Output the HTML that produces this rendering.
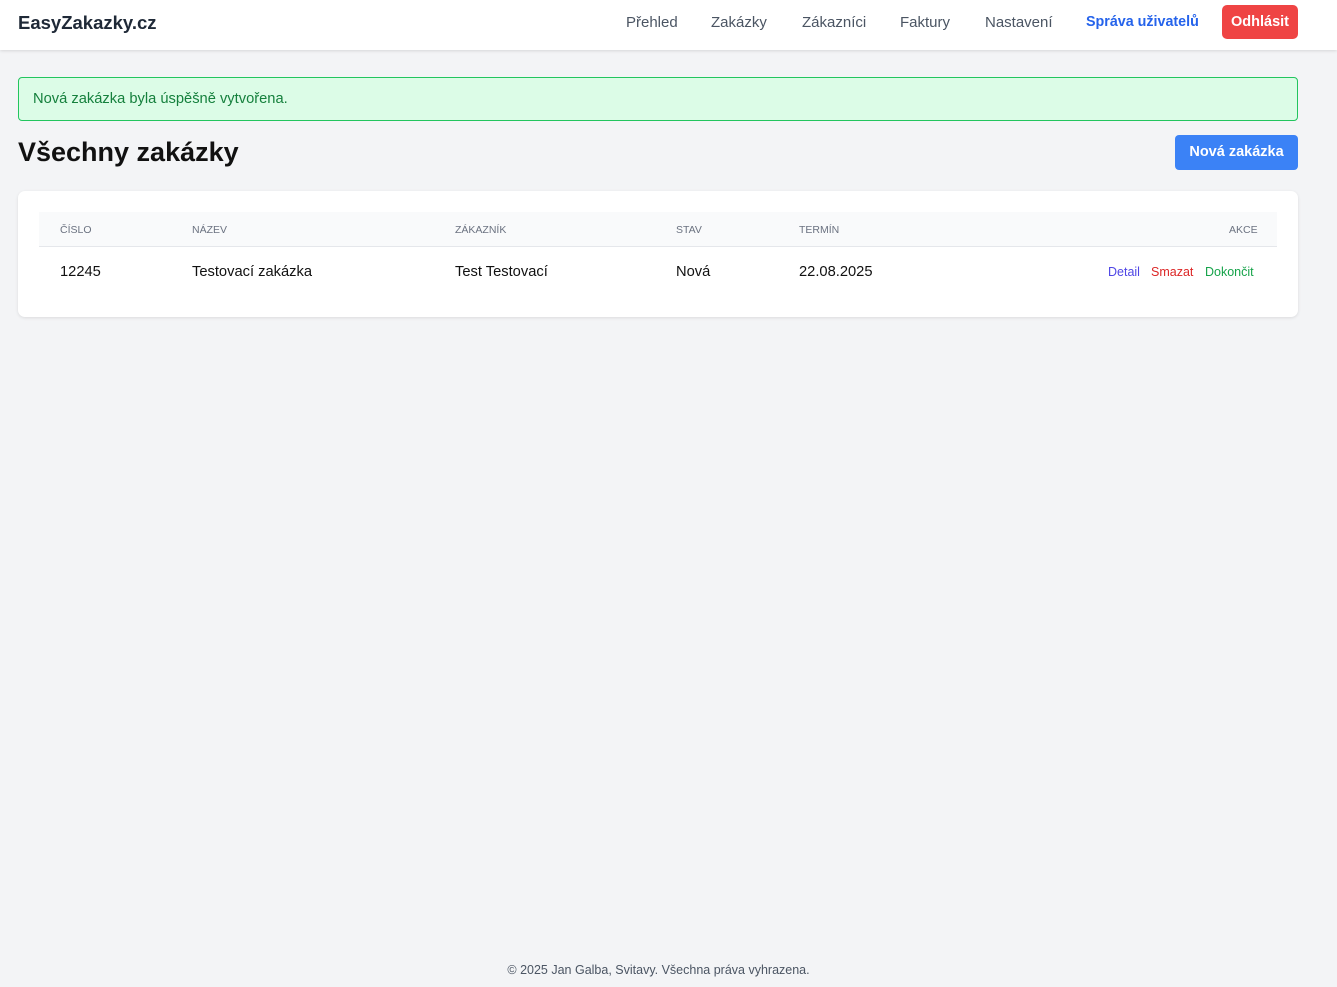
<!DOCTYPE html>
<html><head><meta charset="utf-8"><style>
*{box-sizing:border-box;margin:0;padding:0}
body{width:1337px;height:987px;background:#f3f4f6;font-family:"Liberation Sans",sans-serif;position:relative;overflow:hidden;color:#111}
.nav{position:absolute;top:0;left:0;width:1337px;height:50px;background:#fff;box-shadow:0 1px 3px rgba(0,0,0,.12)}
.logo{position:absolute;left:18px;top:12px;font-size:18.5px;font-weight:bold;color:#1f2937}
.nav a{position:absolute;top:14px;font-size:15px;color:#4b5563;text-decoration:none}
.btnr{position:absolute;left:1222px;top:5px;width:76px;height:34px;background:#ef4444;color:#fff;border-radius:5px;font-weight:bold;font-size:14.5px;text-align:center;line-height:34px}
.alert{position:absolute;left:18px;top:77px;width:1280px;height:44px;background:#dcfce7;border:1px solid #22c55e;border-radius:4px;color:#15803d;font-size:14.7px;padding:13px 14px}
h1{position:absolute;left:18px;top:137px;font-size:27px;font-weight:bold}
.btnb{position:absolute;left:1175px;top:135px;width:123px;height:35px;background:#3b82f6;color:#fff;border-radius:4px;font-weight:bold;font-size:14.5px;text-align:center;line-height:35px}
.card{position:absolute;left:18px;top:191px;width:1280px;height:126px;background:#fff;border-radius:7px;box-shadow:0 1px 3px rgba(0,0,0,.1)}
.th{position:absolute;left:21px;top:21px;width:1238px;height:35px;background:#f9fafb;border-bottom:1px solid #e5e7eb}
.h{position:absolute;top:33px;font-size:10.5px;color:#6b7280}
.c{position:absolute;top:73px;font-size:14.7px;color:#111}
.a{position:absolute;top:74px;font-size:12.5px}
.foot{position:absolute;top:963px;width:100%;text-align:center;font-size:12.5px;color:#4b5563;padding-right:20px}
</style></head><body>
<div class="nav"><div class="logo">EasyZakazky.cz</div>
<a style="left:626px">Přehled</a><a style="left:711px">Zakázky</a><a style="left:802px">Zákazníci</a><a style="left:900px">Faktury</a><a style="left:985px">Nastavení</a><a style="left:1086px;color:#2563eb;font-weight:bold;font-size:14.3px">Správa uživatelů</a>
<div class="btnr">Odhlásit</div></div>
<div class="alert">Nová zakázka byla úspěšně vytvořena.</div>
<h1>Všechny zakázky</h1>
<div class="btnb">Nová zakázka</div>
<div class="card"><div class="th"></div>
<div class="h" style="left:42px">ČÍSLO</div><div class="h" style="left:174px">NÁZEV</div><div class="h" style="left:437px">ZÁKAZNÍK</div><div class="h" style="left:658px">STAV</div><div class="h" style="left:781px">TERMÍN</div><div class="h" style="left:1211px">AKCE</div>
<div class="c" style="left:42px">12245</div><div class="c" style="left:174px">Testovací zakázka</div><div class="c" style="left:437px">Test Testovací</div><div class="c" style="left:658px">Nová</div><div class="c" style="left:781px">22.08.2025</div>
<div class="a" style="left:1090px;color:#4f46e5">Detail</div><div class="a" style="left:1133px;color:#dc2626">Smazat</div><div class="a" style="left:1187px;color:#16a34a">Dokončit</div>
</div>
<div class="foot">© 2025 Jan Galba, Svitavy. Všechna práva vyhrazena.</div>
</body></html>
